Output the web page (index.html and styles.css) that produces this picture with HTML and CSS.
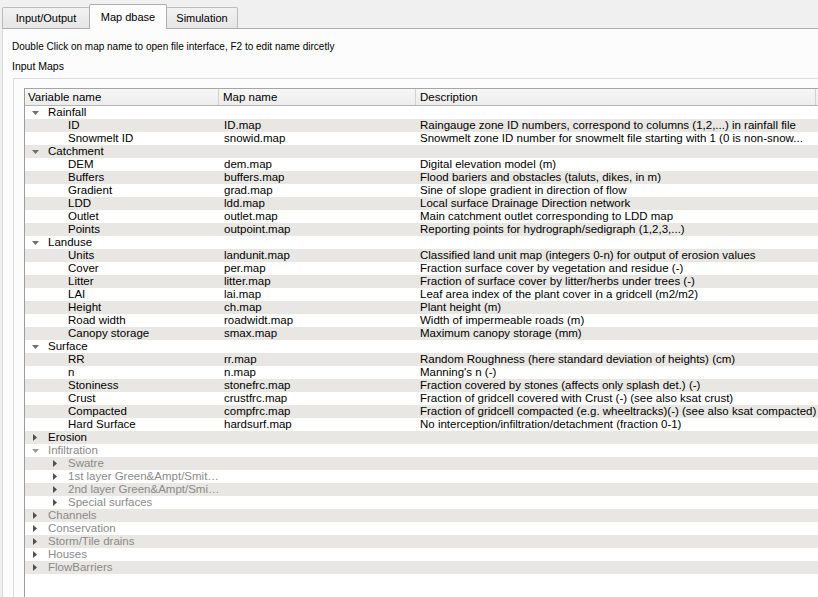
FILE: index.html
```html
<!DOCTYPE html>
<html>
<head>
<meta charset="utf-8">
<link rel="stylesheet" href="styles.css">
</head>
<body>
<div class="tabbar">
  <div class="tab t-io">Input/Output</div>
  <div class="tab active t-map">Map dbase</div>
  <div class="tab t-sim">Simulation</div>
</div>
<div class="panel">
  <div class="hint">Double Click on map name to open file interface, F2 to edit name dircetly</div>
  <div class="grouptitle">Input Maps</div>
  <div class="groupframe">
    <div class="tree">
      <div class="header">
        <div class="h c1">Variable name</div>
        <div class="h c2">Map name</div>
        <div class="h c3">Description</div>
      </div>

      <div class="row"><div class="c1 d0"><span class="tw"><svg width="7" height="4" viewBox="0 0 7 4"><polygon points="0,0 7,0 3.5,4" class="a-down"/></svg></span><span class="t">Rainfall</span></div><div class="c2"></div><div class="c3"></div></div>
      <div class="row"><div class="c1 d1"><span class="tw"></span><span class="t">ID</span></div><div class="c2">ID.map</div><div class="c3">Raingauge zone ID numbers, correspond to columns (1,2,...) in rainfall file</div></div>
      <div class="row"><div class="c1 d1"><span class="tw"></span><span class="t">Snowmelt ID</span></div><div class="c2">snowid.map</div><div class="c3">Snowmelt zone ID number for snowmelt file starting with 1 (0 is non-snow...</div></div>

      <div class="row"><div class="c1 d0"><span class="tw"><svg width="7" height="4" viewBox="0 0 7 4"><polygon points="0,0 7,0 3.5,4" class="a-down"/></svg></span><span class="t">Catchment</span></div><div class="c2"></div><div class="c3"></div></div>
      <div class="row"><div class="c1 d1"><span class="tw"></span><span class="t">DEM</span></div><div class="c2">dem.map</div><div class="c3">Digital elevation model (m)</div></div>
      <div class="row"><div class="c1 d1"><span class="tw"></span><span class="t">Buffers</span></div><div class="c2">buffers.map</div><div class="c3">Flood bariers and obstacles (taluts, dikes, in m)</div></div>
      <div class="row"><div class="c1 d1"><span class="tw"></span><span class="t">Gradient</span></div><div class="c2">grad.map</div><div class="c3">Sine of slope gradient in direction of flow</div></div>
      <div class="row"><div class="c1 d1"><span class="tw"></span><span class="t">LDD</span></div><div class="c2">ldd.map</div><div class="c3">Local surface Drainage Direction network</div></div>
      <div class="row"><div class="c1 d1"><span class="tw"></span><span class="t">Outlet</span></div><div class="c2">outlet.map</div><div class="c3">Main catchment outlet corresponding to LDD map</div></div>
      <div class="row"><div class="c1 d1"><span class="tw"></span><span class="t">Points</span></div><div class="c2">outpoint.map</div><div class="c3">Reporting points for hydrograph/sedigraph (1,2,3,...)</div></div>

      <div class="row"><div class="c1 d0"><span class="tw"><svg width="7" height="4" viewBox="0 0 7 4"><polygon points="0,0 7,0 3.5,4" class="a-down"/></svg></span><span class="t">Landuse</span></div><div class="c2"></div><div class="c3"></div></div>
      <div class="row"><div class="c1 d1"><span class="tw"></span><span class="t">Units</span></div><div class="c2">landunit.map</div><div class="c3">Classified land unit map (integers 0-n) for output of erosion values</div></div>
      <div class="row"><div class="c1 d1"><span class="tw"></span><span class="t">Cover</span></div><div class="c2">per.map</div><div class="c3">Fraction surface cover by vegetation and residue (-)</div></div>
      <div class="row"><div class="c1 d1"><span class="tw"></span><span class="t">Litter</span></div><div class="c2">litter.map</div><div class="c3">Fraction of surface cover by litter/herbs under trees (-)</div></div>
      <div class="row"><div class="c1 d1"><span class="tw"></span><span class="t">LAI</span></div><div class="c2">lai.map</div><div class="c3">Leaf area index of the plant cover in a gridcell (m2/m2)</div></div>
      <div class="row"><div class="c1 d1"><span class="tw"></span><span class="t">Height</span></div><div class="c2">ch.map</div><div class="c3">Plant height (m)</div></div>
      <div class="row"><div class="c1 d1"><span class="tw"></span><span class="t">Road width</span></div><div class="c2">roadwidt.map</div><div class="c3">Width of impermeable roads (m)</div></div>
      <div class="row"><div class="c1 d1"><span class="tw"></span><span class="t">Canopy storage</span></div><div class="c2">smax.map</div><div class="c3">Maximum canopy storage (mm)</div></div>

      <div class="row"><div class="c1 d0"><span class="tw"><svg width="7" height="4" viewBox="0 0 7 4"><polygon points="0,0 7,0 3.5,4" class="a-down"/></svg></span><span class="t">Surface</span></div><div class="c2"></div><div class="c3"></div></div>
      <div class="row"><div class="c1 d1"><span class="tw"></span><span class="t">RR</span></div><div class="c2">rr.map</div><div class="c3">Random Roughness (here standard deviation of heights) (cm)</div></div>
      <div class="row"><div class="c1 d1"><span class="tw"></span><span class="t">n</span></div><div class="c2">n.map</div><div class="c3">Manning's n (-)</div></div>
      <div class="row"><div class="c1 d1"><span class="tw"></span><span class="t">Stoniness</span></div><div class="c2">stonefrc.map</div><div class="c3">Fraction covered by stones (affects only splash det.) (-)</div></div>
      <div class="row"><div class="c1 d1"><span class="tw"></span><span class="t">Crust</span></div><div class="c2">crustfrc.map</div><div class="c3">Fraction of gridcell covered with Crust (-) (see also ksat crust)</div></div>
      <div class="row"><div class="c1 d1"><span class="tw"></span><span class="t">Compacted</span></div><div class="c2">compfrc.map</div><div class="c3">Fraction of gridcell compacted (e.g. wheeltracks)(-) (see also ksat compacted)</div></div>
      <div class="row"><div class="c1 d1"><span class="tw"></span><span class="t">Hard Surface</span></div><div class="c2">hardsurf.map</div><div class="c3">No interception/infiltration/detachment (fraction 0-1)</div></div>

      <div class="row"><div class="c1 d0"><span class="tw"><svg width="4" height="7" viewBox="0 0 4 7"><polygon points="0,0 4,3.5 0,7" class="a-right"/></svg></span><span class="t">Erosion</span></div><div class="c2"></div><div class="c3"></div></div>
      <div class="row off"><div class="c1 d0"><span class="tw"><svg width="7" height="4" viewBox="0 0 7 4"><polygon points="0,0 7,0 3.5,4" class="a-down-off"/></svg></span><span class="t">Infiltration</span></div><div class="c2"></div><div class="c3"></div></div>
      <div class="row off"><div class="c1 d1"><span class="tw"><svg width="4" height="7" viewBox="0 0 4 7"><polygon points="0,0 4,3.5 0,7" class="a-right"/></svg></span><span class="t">Swatre</span></div><div class="c2"></div><div class="c3"></div></div>
      <div class="row off"><div class="c1 d1"><span class="tw"><svg width="4" height="7" viewBox="0 0 4 7"><polygon points="0,0 4,3.5 0,7" class="a-right"/></svg></span><span class="t">1st layer Green&amp;Ampt/Smit…</span></div><div class="c2"></div><div class="c3"></div></div>
      <div class="row off"><div class="c1 d1"><span class="tw"><svg width="4" height="7" viewBox="0 0 4 7"><polygon points="0,0 4,3.5 0,7" class="a-right"/></svg></span><span class="t">2nd layer Green&amp;Ampt/Smi…</span></div><div class="c2"></div><div class="c3"></div></div>
      <div class="row off"><div class="c1 d1"><span class="tw"><svg width="4" height="7" viewBox="0 0 4 7"><polygon points="0,0 4,3.5 0,7" class="a-right"/></svg></span><span class="t">Special surfaces</span></div><div class="c2"></div><div class="c3"></div></div>
      <div class="row off"><div class="c1 d0"><span class="tw"><svg width="4" height="7" viewBox="0 0 4 7"><polygon points="0,0 4,3.5 0,7" class="a-right"/></svg></span><span class="t">Channels</span></div><div class="c2"></div><div class="c3"></div></div>
      <div class="row off"><div class="c1 d0"><span class="tw"><svg width="4" height="7" viewBox="0 0 4 7"><polygon points="0,0 4,3.5 0,7" class="a-right"/></svg></span><span class="t">Conservation</span></div><div class="c2"></div><div class="c3"></div></div>
      <div class="row off"><div class="c1 d0"><span class="tw"><svg width="4" height="7" viewBox="0 0 4 7"><polygon points="0,0 4,3.5 0,7" class="a-right"/></svg></span><span class="t">Storm/Tile drains</span></div><div class="c2"></div><div class="c3"></div></div>
      <div class="row off"><div class="c1 d0"><span class="tw"><svg width="4" height="7" viewBox="0 0 4 7"><polygon points="0,0 4,3.5 0,7" class="a-right"/></svg></span><span class="t">Houses</span></div><div class="c2"></div><div class="c3"></div></div>
      <div class="row off"><div class="c1 d0"><span class="tw"><svg width="4" height="7" viewBox="0 0 4 7"><polygon points="0,0 4,3.5 0,7" class="a-right"/></svg></span><span class="t">FlowBarriers</span></div><div class="c2"></div><div class="c3"></div></div>
    </div>
  </div>
</div>
</body>
</html>
```

FILE: styles.css
```css
html, body {
  margin: 0;
  padding: 0;
  overflow: hidden;
  width: 818px;
  height: 597px;
}
body {
  background: #f0f0f0;
  font-family: "Liberation Sans", Arial, sans-serif;
  color: #000;
}

/* tabs */
.tabbar {
  display: flex;
  align-items: flex-end;
  height: 28px;
  padding-left: 2px;
  box-sizing: border-box;
  position: relative;
  z-index: 1;
}
.tab {
  box-sizing: border-box;
  height: 21px;
  line-height: 20px;
  text-align: center;
  font-size: 11px;
  white-space: nowrap;
  border: 1px solid #bcbcbc;
  border-bottom: none;
  border-radius: 2px 2px 0 0;
  background: linear-gradient(#f2f2f2, #e6e6e6);
  margin-right: -1px;
}
.t-io { width: 88px; }
.t-map { width: 78px; }
.t-sim { width: 72px; }
.tab.active {
  height: 25px;
  line-height: 24px;
  background: #fcfcfc;
  border-color: #adadad;
  margin-bottom: -1px;
  position: relative;
  z-index: 2;
  padding-bottom: 2px;
}

/* panel */
.panel {
  margin-left: 2px;
  border-top: 1px solid #adadad;
  border-left: 1px solid #d9d9d9;
  background: #fcfcfc;
  height: 557px;
  padding: 11px 0 0 9px;
  overflow: hidden;
}
.hint {
  font-size: 10px;
  line-height: 13px;
  height: 13px;
  white-space: nowrap;
}
.grouptitle {
  font-size: 10.5px;
  line-height: 13px;
  margin-top: 7px;
  height: 13px;
}
.groupframe {
  margin-top: 5px;
  margin-left: 1px;
  border-top: 1px solid #dcdcdc;
  border-left: 1px solid #dcdcdc;
  padding: 9px 0 0 10px;
  height: 511px;
}

/* tree */
.tree {
  width: 793px;
  height: 509px;
  border-top: 1px solid #a5a5a5;
  border-left: 1px solid #9c9c9c;
  background: #fff;
  font-family: "Liberation Sans", Arial, sans-serif;
  font-size: 11.5px;
  overflow: hidden;
}
.header {
  display: flex;
  height: 16px;
  border-bottom: 1px solid #b5b5b5;
  background: linear-gradient(#f7f7f7, #ececec);
  line-height: 16px;
}
.h {
  box-sizing: border-box;
  border-right: 1px solid #d2d2d2;
  white-space: nowrap;
  overflow: hidden;
}
.h.c1 { padding-left: 3px; }
.h.c2 { padding-left: 4px; }
.h.c3 { padding-left: 4px; }

.c1 { width: 194px; flex: none; box-sizing: border-box; }
.c2 { width: 197px; flex: none; box-sizing: border-box; }
.c3 { width: 400px; flex: none; box-sizing: border-box; }

.row {
  display: flex;
  height: 13px;
  line-height: 13px;
  white-space: nowrap;
}
.row:nth-child(odd) {
  background: #e9e7e3;
}
.row .c1 {
  display: flex;
  align-items: center;
  overflow: hidden;
}
.row .c2 { padding-left: 5px; overflow: hidden; }
.row .c3 { padding-left: 4px; overflow: hidden; }

.d0 { padding-left: 0; }
.d1 { padding-left: 20px; }
.tw {
  width: 20px;
  height: 13px;
  flex: none;
  display: flex;
  align-items: center;
  justify-content: center;
}
.tw svg { display: block; }
.t { margin-left: 3px; }

.a-down { fill: #6f6f6f; }
.a-down-off { fill: #9a9a9a; }
.a-right { fill: #505050; }

.row.off .t { color: #8a8a8a; }
```
